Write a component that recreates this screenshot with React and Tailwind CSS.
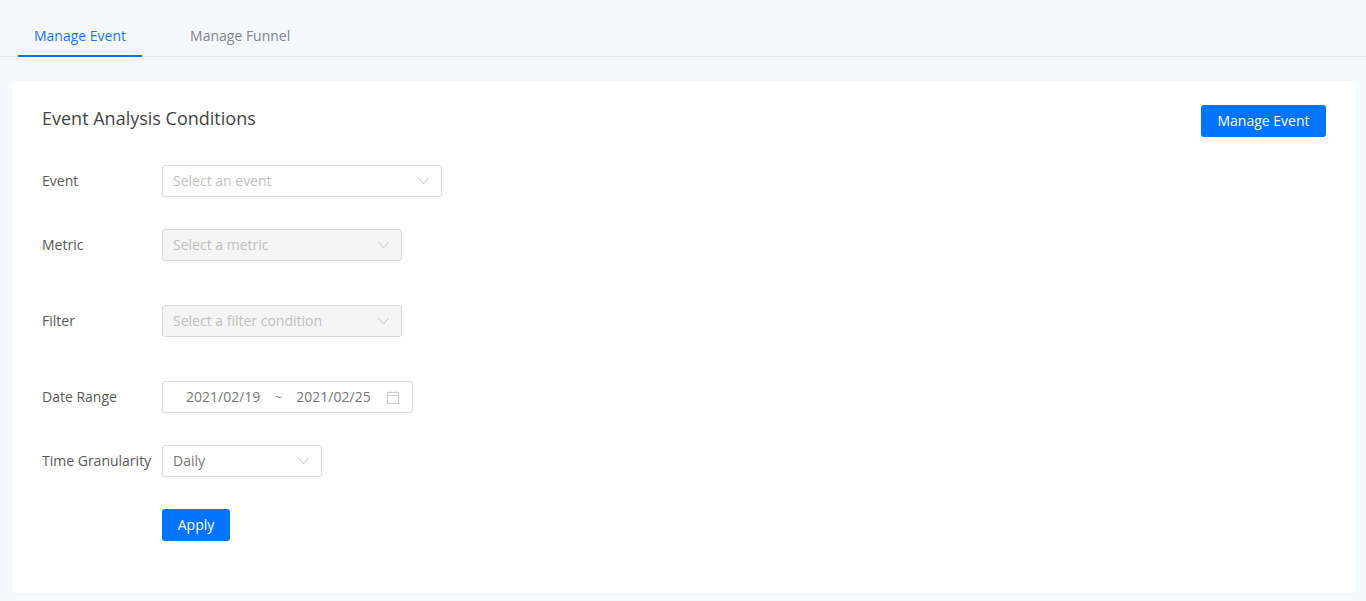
import React from 'react';

function Chevron({ className }) {
    return (
        <svg className={className} width="11" height="11" viewBox="0 0 11 11" fill="none" stroke="#c4c4c4" strokeWidth="1">
            <path d="M0.5 2 L5.5 8 L10.5 2" />
        </svg>
    );
}

function CalendarIcon() {
    return (
        <svg width="12" height="13" viewBox="0 0 12 13" fill="none" stroke="#cccccc" strokeWidth="1">
            <rect x="0.5" y="1.5" width="11" height="11" />
            <path d="M0.5 4.5 H11.5 M3.5 0 V2.5 M8.5 0 V2.5" />
        </svg>
    );
}

function Select({ width, placeholder, value, disabled }) {
    return (
        <div className={`${width} h-8 flex items-center justify-between pl-[10px] pr-[12px] rounded-[3px] border border-[#d9d9d9] ${disabled ? 'bg-[#f5f5f5]' : 'bg-white'}`}>
            <span className={value ? 'text-[#777777]' : 'text-[#bfbfbf]'}>{value || placeholder}</span>
            <Chevron />
        </div>
    );
}

function Row({ label, className, children }) {
    return (
        <div className={`flex items-center ${className}`}>
            <label className="w-[120px] text-[#595959]">{label}</label>
            {children}
        </div>
    );
}

function App() {
    return (
        <div className="h-[601px] bg-[#f5f8ff] text-sm overflow-hidden font-['Open_Sans','Noto_Sans',sans-serif]">
            <div className="h-[57px] flex items-end pl-[18px] border-b border-[#e3e6ec]">
                <div className="h-[57px] -mb-px flex items-center pt-[16px] px-4 text-[#1677ff] border-b-2 border-[#0073ff]">Manage Event</div>
                <div className="h-[57px] -mb-px flex items-center pt-[16px] pb-[2px] px-4 ml-8 text-[#80858f]">Manage Funnel</div>
            </div>

            <div className="ml-3 mr-[10px] mt-6 h-[512px] bg-white rounded pt-6 px-[30px]">
                <div className="flex justify-between items-start mb-7">
                    <h2 className="text-lg leading-[26px] text-[#444444]">Event Analysis Conditions</h2>
                    <button className="h-8 w-[125px] rounded-[3px] bg-[#0073ff] text-white font-medium">Manage Event</button>
                </div>

                <Row label="Event" className="mb-8">
                    <Select width="w-[280px]" placeholder="Select an event" />
                </Row>
                <Row label="Metric" className="mb-[44px]">
                    <Select width="w-[240px]" placeholder="Select a metric" disabled />
                </Row>
                <Row label="Filter" className="mb-[44px]">
                    <Select width="w-[240px]" placeholder="Select a filter condition" disabled />
                </Row>
                <Row label="Date Range" className="mb-8">
                    <div className="w-[251px] h-8 flex items-center pl-[23px] pr-[13px] rounded-[3px] border border-[#d9d9d9] text-[#777777]">
                        <span>2021/02/19</span>
                        <span className="ml-[14px] text-[#999999]">~</span>
                        <span className="ml-[14px]">2021/02/25</span>
                        <span className="ml-auto flex"><CalendarIcon /></span>
                    </div>
                </Row>
                <Row label="Time Granularity" className="mb-8">
                    <Select width="w-[160px]" value="Daily" />
                </Row>
                <div className="pl-[120px]">
                    <button className="h-8 w-[68px] rounded-[3px] bg-[#0073ff] text-white font-medium">Apply</button>
                </div>
            </div>
        </div>
    );
}

export default App;
